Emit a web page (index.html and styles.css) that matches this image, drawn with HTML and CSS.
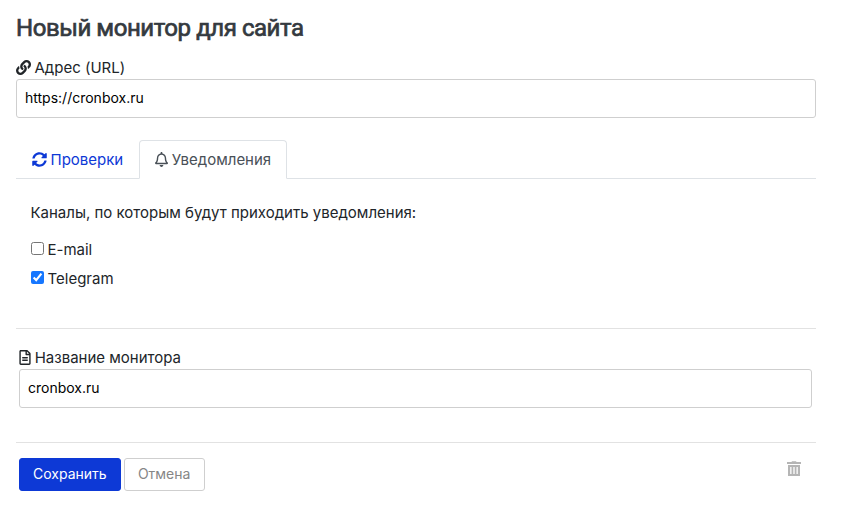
FILE: index.html
```html
<!DOCTYPE html>
<html lang="ru">
<head>
<meta charset="utf-8">
<title>Новый монитор для сайта</title>
<link rel="stylesheet" href="styles.css">
</head>
<body>
<form class="monitor">
  <h1>Новый монитор для сайта</h1>
  <label class="label" for="url"><svg class="icon link" viewBox="0 0 512 512"><path d="M326.612 185.391c59.747 59.809 58.927 155.698.36 214.59-.11.12-.24.25-.36.37l-67.2 67.2c-59.27 59.27-155.699 59.262-214.96 0-59.27-59.26-59.27-155.7 0-214.96l37.106-37.106c9.84-9.84 26.786-3.3 27.294 10.606.648 17.722 3.826 35.527 9.69 52.721 1.986 5.822.567 12.262-3.783 16.612l-13.087 13.087c-28.026 28.026-28.905 73.66-1.155 101.96 28.024 28.579 74.086 28.749 102.325.51l67.2-67.19c28.191-28.191 28.073-73.757 0-101.83-3.701-3.694-7.429-6.564-10.341-8.569a16.037 16.037 0 0 1-6.947-12.606c-.396-10.567 3.348-21.456 11.698-29.806l21.054-21.055c5.521-5.521 14.182-6.199 20.584-1.731a152.482 152.482 0 0 1 20.522 17.197zM467.547 44.449c-59.261-59.262-155.69-59.27-214.96 0l-67.2 67.2c-.12.12-.25.25-.36.37-58.566 58.892-59.387 154.781.36 214.59a152.454 152.454 0 0 0 20.521 17.196c6.402 4.468 15.064 3.789 20.584-1.731l21.054-21.055c8.35-8.35 12.094-19.239 11.698-29.806a16.037 16.037 0 0 0-6.947-12.606c-2.912-2.005-6.64-4.875-10.341-8.569-28.073-28.073-28.191-73.639 0-101.83l67.2-67.19c28.239-28.239 74.3-28.069 102.325.51 27.75 28.3 26.872 73.934-1.155 101.96l-13.087 13.087c-4.35 4.35-5.769 10.79-3.783 16.612 5.864 17.194 9.042 34.999 9.69 52.721.509 13.906 17.454 20.446 27.294 10.606l37.106-37.106c59.271-59.259 59.271-155.699.001-214.959z"/></svg>Адрес (URL)</label>
  <input class="field" id="url" type="text" value="https://cronbox.ru">
  <nav class="tabs">
    <a class="tab"><svg class="icon" viewBox="0 0 512 512"><path d="M370.72 133.28C339.458 104.008 298.888 87.962 255.848 88c-77.458.068-144.328 53.178-162.791 126.85-1.344 5.363-6.122 9.15-11.651 9.15H24.103c-7.498 0-13.194-6.807-11.807-14.176C33.933 94.924 134.813 8 256 8c66.448 0 126.791 26.136 171.315 68.685L463.03 40.97C478.149 25.851 504 36.559 504 57.941V192c0 13.255-10.745 24-24 24H345.941c-21.382 0-32.09-25.851-16.971-40.971l41.75-41.749zM32 296h134.059c21.382 0 32.09 25.851 16.971 40.971l-41.75 41.75c31.262 29.273 71.835 45.319 114.876 45.28 77.418-.07 144.315-53.144 162.787-126.849 1.344-5.363 6.122-9.15 11.651-9.15h57.304c7.498 0 13.194 6.807 11.807 14.176C478.067 417.076 377.187 504 256 504c-66.448 0-126.791-26.136-171.315-68.685L48.97 471.03C33.851 486.149 8 475.441 8 454.059V320c0-13.255 10.745-24 24-24z"/></svg>Проверки</a>
    <a class="tab active"><svg class="icon bell" viewBox="0 0 448 512"><path d="M439.39 362.29c-19.32-20.76-55.47-51.99-55.47-154.29 0-77.7-54.48-139.9-127.94-155.16V32c0-17.67-14.32-32-31.98-32s-31.98 14.33-31.98 32v20.84C118.56 68.1 64.08 130.3 64.08 208c0 102.3-36.15 133.53-55.47 154.29-6 6.45-8.66 14.16-8.61 21.71.11 16.4 12.98 32 32.1 32h383.8c19.12 0 32-15.6 32.1-32 .05-7.55-2.61-15.27-8.61-21.71zM67.53 368c21.22-27.97 44.42-74.33 44.53-159.42 0-.2-.06-.38-.06-.58 0-61.86 50.14-112 112-112s112 50.14 112 112c0 .2-.06.38-.06.58.11 85.1 23.31 131.46 44.53 159.42H67.53zM224 512c35.32 0 63.97-28.65 63.97-64H160.03c0 35.35 28.65 64 63.97 64z"/></svg>Уведомления</a>
  </nav>
  <section class="channels">
    <p>Каналы, по которым будут приходить уведомления:</p>
    <label class="channel"><input type="checkbox">E-mail</label>
    <label class="channel"><input type="checkbox" checked>Telegram</label>
  </section>
  <section class="name">
    <label class="label" for="name"><svg class="icon file" viewBox="0 0 384 512"><path d="M288 248v28c0 6.600-5.400 12-12 12H108c-6.600 0-12-5.400-12-12v-28c0-6.600 5.400-12 12-12h168c6.600 0 12 5.400 12 12zm-12 72H108c-6.600 0-12 5.400-12 12v28c0 6.600 5.400 12 12 12h168c6.600 0 12-5.400 12-12v-28c0-6.600-5.400-12-12-12zm108-188.100V464c0 26.500-21.500 48-48 48H48c-26.500 0-48-21.500-48-48V48C0 21.500 21.500 0 48 0h204.100C264.800 0 277 5.100 286 14.100L369.900 98c9 8.900 14.100 21.200 14.100 33.900zm-128-80V128h76.100L256 51.900zM336 464V176H232c-13.300 0-24-10.700-24-24V48H48v416h288z"/></svg>Название монитора</label>
    <input class="field" id="name" type="text" value="cronbox.ru">
  </section>
  <footer class="actions">
    <button class="btn primary" type="button">Сохранить</button>
    <button class="btn" type="button">Отмена</button>
    <svg class="trash" viewBox="0 0 14 16"><path fill-rule="evenodd" d="M4.500 1L5 .2h4l.5.8H14v2H0V1zM1 4h12v11H1zM3.200 6v7h1.300V6zM6.350 6v7h1.300V6zM9.500 6v7h1.300V6z"/></svg>
  </footer>
</form>
</body>
</html>
```
FILE: styles.css
```css
* { box-sizing: border-box; }
body { margin: 0; background: #fff; color: #212529; font: 15px/22px Inter, sans-serif; }
.monitor { width: 800px; margin-left: 16px; padding-top: 14px; }
h1 { margin: 0 0 14px; font: 400 24px/29px Roboto, sans-serif; letter-spacing: -0.44px; color: #343a40; -webkit-text-stroke: 0.7px #343a40; }
.label { display: flex; align-items: center; height: 22px; }
.icon { width: 15px; height: 15px; margin-right: 4px; fill: currentColor; flex: none; }
.link { margin: -1px 4px 0 -0.5px; }
.field { display: block; width: 100%; height: 39px; padding: 0 8px 2px; border: 1px solid #cfcfcf; border-radius: 3px; background: #fff; color: #000; font: 14px Inter, sans-serif; }
.tabs { display: flex; margin-top: 22px; height: 39px; border-bottom: 1px solid #dee2e6; }
.tab { display: flex; align-items: center; height: 39px; padding: 0 15.5px; color: #0d39d6; }
.active { padding: 0 14.8px 0 15px; border: 1px solid #dee2e6; border-bottom-color: #fff; border-radius: 4px 4px 0 0; background: #fff; color: #495057; }
.bell { width: 13px; }
.channels { height: 149px; padding: 23px 15px 0 14.5px; }
.channels p { margin: 0 0 15px; }
.channel { display: flex; align-items: center; height: 22px; margin-bottom: 7px; }
.channel input { width: 13px; height: 13px; margin: 0 3.5px 3px 0.5px; accent-color: #1677ff; }
.name { height: 114px; padding: 18px 4px 0 3px; border-top: 1px solid #e2e2e2; }
.file { width: 12px; margin: -1px 3.7px 0 0; }
.actions { display: flex; padding: 15px 15px 0 3px; border-top: 1px solid #e2e2e2; }
.btn { height: 33px; margin-right: 3px; padding: 0 13px 2px; border: 1px solid #cfcfcf; border-radius: 3px; background: #fff; color: #868686; font: 14px Inter, sans-serif; }
.btn:not(.primary) { width: 81px; }
.primary { border-color: #0d39d6; background: #0d39d6; color: #fff; }
.trash { width: 14px; height: 16px; margin: 3px 0 0 auto; fill: #b5b5b5; }
```
